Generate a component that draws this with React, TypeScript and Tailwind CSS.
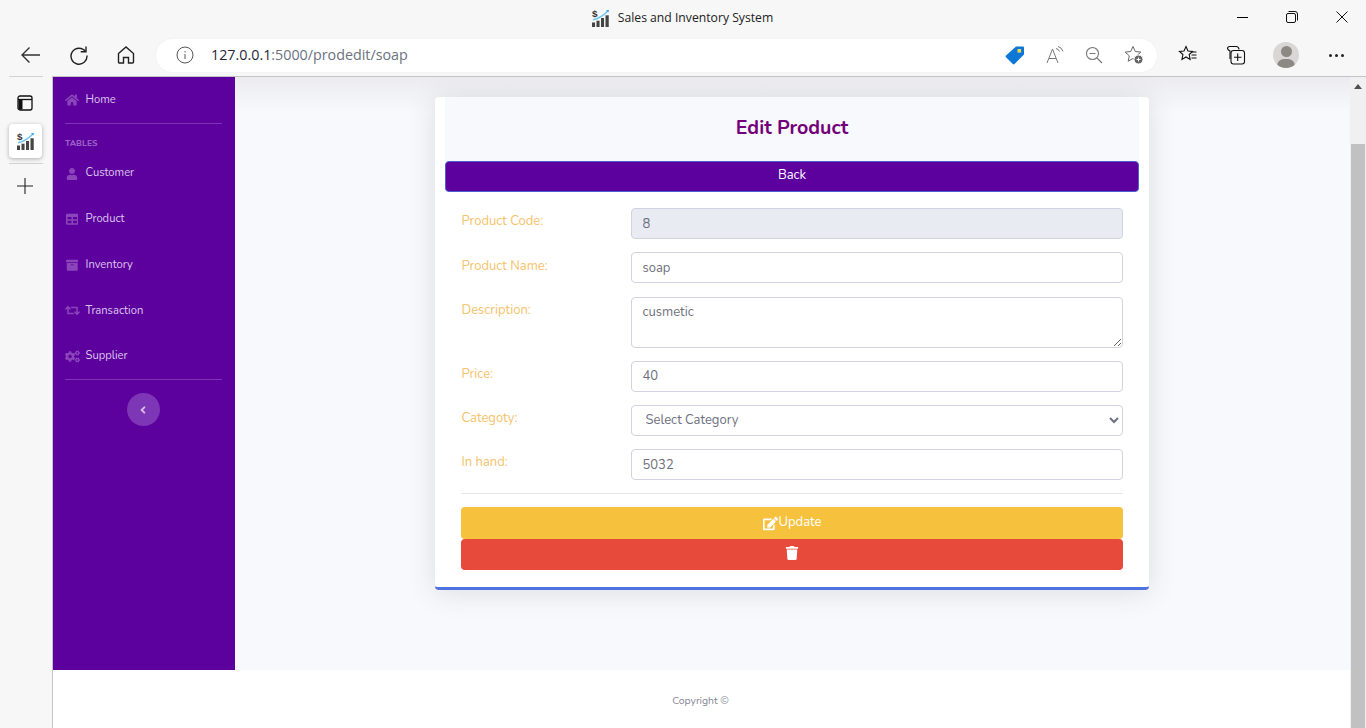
import React from 'react';
import { FaHome, FaUser, FaTable, FaArchive, FaRetweet, FaCogs, FaAngleLeft, FaEdit, FaTrash } from 'react-icons/fa';

const SiteLogo = ({ size = 18 }: { size?: number }) => (
  <svg width={size} height={size} viewBox="0 0 20 20">
    <text x="0" y="9" fontSize="11" fontWeight="700" fontFamily="Liberation Sans" fill="#333">$</text>
    <path d="M1 12 C7 11 13 7 18 2" stroke="#6fc3f2" strokeWidth="1.6" fill="none" />
    <path d="M19 1l-3.5 .5 2.5 2.5z" fill="#2fa6ea" />
    <rect x="0" y="15" width="3.4" height="5" fill="#444" />
    <rect x="5" y="13" width="3.4" height="7" fill="#444" />
    <rect x="10" y="10" width="3.4" height="10" fill="#444" />
    <rect x="15" y="7" width="3.6" height="13" fill="#444" />
  </svg>
);

const TitleBar = () => (
  <div className="relative h-[36px] pt-[1px] flex items-center justify-center">
    <div className="flex items-center gap-[8px] -ml-[1px] text-[12.2px] text-[#222] [font-family:'Open_Sans',sans-serif]">
      <SiteLogo />
      <span>Sales and Inventory System</span>
    </div>
    <div className="absolute -right-[1px] top-0 flex">
      <div className="w-[50px] h-[34px] flex items-center justify-center">
        <div className="w-[11px] h-px bg-black" />
      </div>
      <div className="w-[50px] h-[34px] flex items-center justify-center">
        <svg width="12" height="12" viewBox="0 0 12 12" fill="none" stroke="#111" strokeWidth="1">
          <rect x="0.5" y="2.5" width="9" height="9" rx="1.5" />
          <path d="M2.5 .5h6.5a2.5 2.5 0 0 1 2.5 2.5v6.5" />
        </svg>
      </div>
      <div className="w-[50px] h-[34px] flex items-center justify-center">
        <svg width="12" height="12" viewBox="0 0 12 12" stroke="#111" strokeWidth="1">
          <path d="M.5 .5l11 11M11.5 .5l-11 11" />
        </svg>
      </div>
    </div>
  </div>
);

const Toolbar = () => (
  <div className="h-[40px] flex items-center pl-[12px] pb-[2px]">
    <svg width="36" height="36" viewBox="0 0 36 36" fill="none" stroke="#333" strokeWidth="1.4" className="ml-[1px]">
      <path d="M27 18H9M16.5 10.5L9 18l7.5 7.5" />
    </svg>
    <svg width="20" height="20" viewBox="0 0 20 20" fill="none" stroke="#222" strokeWidth="1.4" className="ml-[20px]">
      <path d="M16.5 6.5A8 8 0 1 0 18 10.5" />
      <path d="M17 1.5v5.3h-5.3" />
    </svg>
    <svg width="20" height="20" viewBox="0 0 20 20" fill="none" stroke="#222" strokeWidth="1.4" className="ml-[27px]">
      <path d="M2.5 8.5L10 2l7.5 6.5V17a1 1 0 0 1-1 1H12.5v-5.5h-5V18H3.5a1 1 0 0 1-1-1z" />
    </svg>
    <div className="ml-[20px] w-[1001px] h-[33px] bg-white rounded-full flex items-center pl-[20px] pr-[15px] shadow-[0_0_2px_rgba(0,0,0,0.06)]">
      <svg width="18" height="18" viewBox="0 0 18 18" fill="none" stroke="#555" strokeWidth="1">
        <circle cx="9" cy="9" r="8" />
        <path d="M9 8v5M9 5v1.4" />
      </svg>
      <div className="ml-[17px] text-[14.3px] text-[#6b7280] [font-family:'Open_Sans',sans-serif]">
        <span className="text-[#1f2937]">127.0.0.1</span>:5000/prodedit/soap
      </div>
      <div className="ml-auto flex items-center gap-[21px]">
        <svg width="20" height="20" viewBox="0 0 20 20">
          <path d="M11 1.5h7a1 1 0 0 1 1 1v7L9.5 19a1.2 1.2 0 0 1-1.7 0L1 12.2a1.2 1.2 0 0 1 0-1.7z" fill="#0b78d8" />
          <rect x="12.5" y="4" width="3.6" height="3.6" fill="#f7d44c" />
        </svg>
        <svg width="18" height="18" viewBox="0 0 18 18" fill="none" stroke="#777" strokeWidth="1">
          <path d="M1 17L6.5 3 12 17M3 12.5h7" />
          <path d="M10 2.5a5 5 0 0 1 3.5 3M12 .5a7 7 0 0 1 5 5" />
        </svg>
        <svg width="18" height="18" viewBox="0 0 18 18" fill="none" stroke="#777" strokeWidth="1.1">
          <circle cx="7.5" cy="7.5" r="6" />
          <path d="M4.5 7.5h6M12 12l5 5" />
        </svg>
        <svg width="20" height="20" viewBox="0 0 20 20" fill="none" stroke="#666" strokeWidth="1" className="-mr-[2px]">
          <path d="M9 1.5l2.3 5 5.5.6-4.1 3.7 1.1 5.4-4.8-2.7-4.8 2.7 1.1-5.4L1.2 7.1l5.5-.6z" />
          <circle cx="14.5" cy="14.5" r="4.5" fill="#666" stroke="#fff" />
          <path d="M14.5 12.5v4M12.5 14.5h4" stroke="#fff" />
        </svg>
      </div>
    </div>
    <div className="ml-[21px] flex items-center">
      <svg width="20" height="20" viewBox="0 0 20 20" fill="none" stroke="#111" strokeWidth="1.1">
        <path d="M8 1.5l2 4.5 4.5.5-3.3 3 .9 5L8 12l-4 2.5.9-5L1.5 6.5 6 6z" />
        <path d="M13.5 7h5M13.5 10h5M13.5 13h5" />
      </svg>
      <svg width="20" height="20" viewBox="0 0 20 20" fill="none" stroke="#111" strokeWidth="1.1" className="ml-[28px]">
        <path d="M4 14V6a4 4 0 0 1-2.5-2.5A2 2 0 0 1 3.5 1.5h7a3 3 0 0 1 2.5 3" />
        <rect x="5" y="5.5" width="13.5" height="13.5" rx="2.5" fill="#f7f7f7" />
        <path d="M11.7 8.5v7.5M8 12.2h7.5" />
      </svg>
      <div className="ml-[27px] w-[26px] h-[26px] rounded-full bg-[#d8d7d5] overflow-hidden relative">
        <div className="absolute left-[8px] top-[4px] w-[11px] h-[11px] rounded-full bg-[#8c8984]" />
        <div className="absolute left-[4px] top-[17px] w-[18px] h-[14px] rounded-full bg-[#8c8984]" />
      </div>
      <div className="ml-[30px] flex gap-[3px]">
        <div className="w-[3px] h-[3px] rounded-full bg-[#222]" />
        <div className="w-[3px] h-[3px] rounded-full bg-[#222]" />
        <div className="w-[3px] h-[3px] rounded-full bg-[#222]" />
      </div>
    </div>
  </div>
);

const LeftRail = () => (
  <div className="w-[53px] shrink-0 h-full bg-[#f7f7f7] border-r border-r-[#c4c4c4] flex flex-col items-center">
    <div className="w-[34px] mr-[2px] h-[47px] pt-[5px] flex items-center justify-center">
      <svg width="16" height="16" viewBox="0 0 16 16" fill="none" stroke="#111" strokeWidth="1.3">
        <rect x="1" y="1" width="14" height="14" rx="2" />
        <path d="M1 4.5h14" />
        <rect x="1.5" y="4.5" width="4" height="10" fill="#111" stroke="none" />
      </svg>
    </div>
    <div className="w-[33px] h-[34px] mr-[1px] bg-white rounded-[4px] shadow-[0_1px_4px_rgba(0,0,0,0.3)] flex items-center justify-center">
      <SiteLogo />
    </div>
    <div className="w-[34px] h-px mr-[1px] mt-[5px] bg-[#d2d2d2]" />
    <svg width="16" height="16" viewBox="0 0 16 16" stroke="#222" strokeWidth="1.1" className="mt-[14px] mr-[2px]">
      <path d="M8 0v16M0 8h16" />
    </svg>
  </div>
);

const navItems = [
  { label: 'Customer', Icon: FaUser, size: 'text-[12px]' },
  { label: 'Product', Icon: FaTable, size: 'text-[12.5px]' },
  { label: 'Inventory', Icon: FaArchive, size: 'text-[12.5px]' },
  { label: 'Transaction', Icon: FaRetweet, size: 'text-[15px]' },
  { label: 'Supplier', Icon: FaCogs, size: 'text-[15px]' },
];

const Sidebar = () => (
  <div className="w-[182px] shrink-0 bg-[#5c009e] flex flex-col pl-[12px] pr-[13px] text-[11.2px] text-[#dcc7ec]">
    <div className="h-[46px] flex items-center gap-[7.5px] pl-[1px]">
      <span className="w-[12px] flex justify-center"><FaHome className="text-[14px] shrink-0 text-[#8a45bb]" /></span>
      <span>Home</span>
    </div>
    <div className="h-px bg-[#7c33b4] mb-[13px]" />
    <div className="text-[8.5px] leading-[12px] font-extrabold uppercase text-[#9a5fc7]">Tables</div>
    <div className="flex flex-col mt-[2px]">
      {navItems.map(({ label, Icon, size }) => (
        <div key={label} className="h-[45.7px] flex items-center gap-[7.5px] pl-[1px]">
          <span className="w-[12px] flex justify-center"><Icon className={`${size} shrink-0 text-[#8a45bb]`} /></span>
          <span>{label}</span>
        </div>
      ))}
    </div>
    <div className="h-px bg-[#7c33b4]" />
    <button className="self-center ml-[-1px] mt-[13px] w-[33px] h-[33px] rounded-full bg-[#7d36b5] flex items-center justify-center text-[#d6bee9]">
      <FaAngleLeft className="text-[12px]" />
    </button>
  </div>
);

const inputClass =
  'flex-1 min-w-0 border border-[#d1d3e2] rounded-[4px] px-[11px] text-[13px] text-[#6e707e] outline-none';

const FormRow = ({ label, children, className = '', labelClass = 'pt-[4px]' }: { label: string; children: React.ReactNode; className?: string; labelClass?: string }) => (
  <div className={`flex ${className}`}>
    <label className={`w-[170px] shrink-0 pl-[1px] text-[13px] leading-[18px] text-[#f6c26b] ${labelClass}`}>{label}</label>
    {children}
  </div>
);

const EditCard = () => (
  <div className="w-[714px] h-[493px] bg-white rounded-[4px] border-b-[3px] border-b-[#4e73df] shadow-[0_2px_28px_rgba(58,59,69,0.15)] flex flex-col">
    <div className="mx-[10px] h-[64px] pb-[2px] bg-[#f8f9fc] flex items-center justify-center">
      <h2 className="text-[19.6px] font-bold text-[#730078] pl-[1px]">Edit Product</h2>
    </div>
    <button className="mx-[10px] h-[31px] pb-[2px] pl-[1px] bg-[#5c009e] border border-[#4b5fd0] rounded-[4px] text-[13px] text-white">Back</button>
    <div className="px-[26px] pt-[16px] flex flex-col">
      <FormRow label="Product Code:">
        <input readOnly value="8" className={`${inputClass} h-[31px] bg-[#e9ebf3]`} />
      </FormRow>
      <FormRow label="Product Name:" className="mt-[13px]" labelClass="pt-[5px]">
        <input readOnly value="soap" className={`${inputClass} h-[31px] bg-white`} />
      </FormRow>
      <FormRow label="Description:" className="mt-[14px]">
        <textarea readOnly value="cusmetic" className={`${inputClass} h-[51px] pt-[5px] block bg-white`} />
      </FormRow>
      <FormRow label="Price:" className="mt-[13px]">
        <input readOnly value="40" className={`${inputClass} h-[31px] pb-[2px] bg-white`} />
      </FormRow>
      <FormRow label="Categoty:" className="mt-[13px]">
        <select className={`${inputClass} h-[31px] pl-[10px] pb-[1px] bg-white`}>
          <option>Select Category</option>
        </select>
      </FormRow>
      <FormRow label="In hand:" className="mt-[13px]">
        <input readOnly value="5032" className={`${inputClass} h-[31px] bg-white`} />
      </FormRow>
      <div className="h-px bg-[#e3e6f0] mt-[13px] mb-[13px]" />
      <button className="h-[32px] pl-[1px] bg-[#f6c23e] rounded-[4px] text-[13px] text-white flex items-center justify-center gap-[1px]">
        <FaEdit className="text-[15px]" />
        <span>Update</span>
      </button>
      <button className="h-[31px] bg-[#e74a3b] rounded-[4px] text-white flex items-center justify-center pb-[4px]">
        <FaTrash className="text-[14px]" />
      </button>
    </div>
  </div>
);

const App = () => (
  <div className="w-[1366px] h-[728px] overflow-hidden bg-[#f7f7f7] flex flex-col [font-family:'Nunito','Noto_Sans',sans-serif]">
    <div className="h-[77px] shrink-0 flex flex-col">
      <TitleBar />
      <Toolbar />
      <div className="h-px flex">
        <div className="w-[9px]" />
        <div className="w-[34px] bg-[#d2d2d2]" />
        <div className="w-[9px]" />
        <div className="flex-1 bg-[#c4c4c4]" />
      </div>
    </div>
    <div className="flex-1 min-h-0 flex">
      <LeftRail />
      <div className="flex-1 min-w-0 bg-white flex flex-col">
        <div className="h-[593px] shrink-0 flex">
          <Sidebar />
          <div className="relative flex-1 min-w-0 bg-[#f8f9fc] flex justify-center pt-[20px] pr-[2px]">
            <div className="absolute inset-x-0 top-0 h-[36px] bg-gradient-to-b from-[#ececf0] to-transparent pointer-events-none" />
            <div className="relative">
              <EditCard />
            </div>
          </div>
        </div>
        <div className="flex-1 flex items-center justify-center text-[10.4px] text-[#858796] pt-[3px] pr-[2px]">
          <span>Copyright ©</span>
        </div>
      </div>
      <div className="w-[16px] shrink-0 bg-[#f0f0f0] flex flex-col items-center">
        <div className="w-0 h-0 mt-[7px] border-x-[4px] border-x-transparent border-b-[5px] border-b-[#505050]" />
        <div className="w-[14px] flex-1 mt-[55px] bg-[#c1c1c1]" />
      </div>
    </div>
  </div>
);

export default App;
